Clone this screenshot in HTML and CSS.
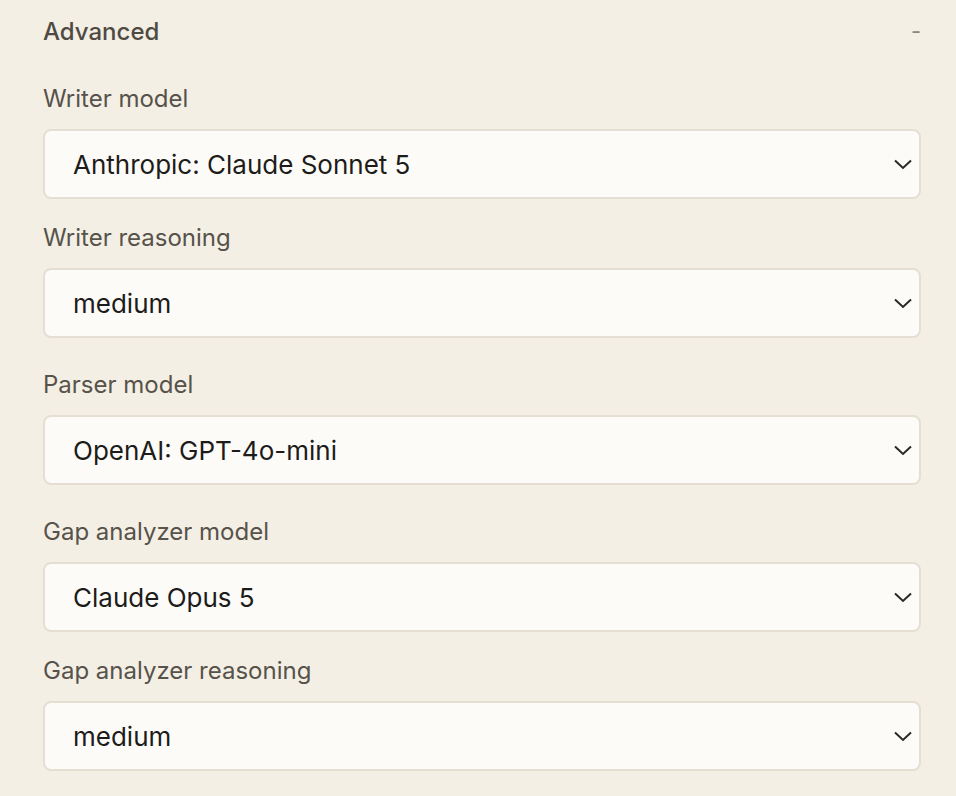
FILE: index.html
```html
<!DOCTYPE html>
<html>
<head>
<meta charset="utf-8">
<link rel="stylesheet" href="styles.css">
</head>
<body>
<div class="panel">
  <div class="header">
    <span class="title">Advanced</span>
    <span class="toggle">-</span>
  </div>
  <div class="group">
    <div class="field">
      <div class="label">Writer model</div>
      <div class="select"><span>Anthropic: Claude Sonnet 5</span><svg class="chev" width="18" height="11" viewBox="0 0 18 11"><path d="M1 1.5 L9 9 L17 1.5" fill="none" stroke="#2a2826" stroke-width="2"/></svg></div>
    </div>
    <div class="field">
      <div class="label">Writer reasoning</div>
      <div class="select"><span>medium</span><svg class="chev" width="18" height="11" viewBox="0 0 18 11"><path d="M1 1.5 L9 9 L17 1.5" fill="none" stroke="#2a2826" stroke-width="2"/></svg></div>
    </div>
  </div>
  <div class="group">
    <div class="field">
      <div class="label">Parser model</div>
      <div class="select"><span>OpenAI: GPT-4o-mini</span><svg class="chev" width="18" height="11" viewBox="0 0 18 11"><path d="M1 1.5 L9 9 L17 1.5" fill="none" stroke="#2a2826" stroke-width="2"/></svg></div>
    </div>
  </div>
  <div class="group">
    <div class="field">
      <div class="label">Gap analyzer model</div>
      <div class="select"><span>Claude Opus 5</span><svg class="chev" width="18" height="11" viewBox="0 0 18 11"><path d="M1 1.5 L9 9 L17 1.5" fill="none" stroke="#2a2826" stroke-width="2"/></svg></div>
    </div>
    <div class="field">
      <div class="label">Gap analyzer reasoning</div>
      <div class="select"><span>medium</span><svg class="chev" width="18" height="11" viewBox="0 0 18 11"><path d="M1 1.5 L9 9 L17 1.5" fill="none" stroke="#2a2826" stroke-width="2"/></svg></div>
    </div>
  </div>
</div>
</body>
</html>
```
FILE: styles.css
```css
html, body {
  margin: 0;
  padding: 0;
  background: #f3efe5;
}
body {
  font-family: Inter, "Noto Sans", sans-serif;
  width: 956px;
  height: 796px;
  overflow: hidden;
}
.panel {
  padding: 16px 35px 0 43px;
  display: flex;
  flex-direction: column;
  gap: 32px;
}
.header {
  display: flex;
  justify-content: space-between;
  align-items: center;
  height: 30px;
  margin-bottom: 6px;
}
.title {
  font-size: 24px;
  font-weight: 500;
  color: #4f4a42;
}
.toggle {
  font-size: 22px;
  color: #8a8680;
  padding-right: 0;
}
.group {
  display: flex;
  flex-direction: column;
  gap: 24px;
}
.field {
  display: flex;
  flex-direction: column;
  gap: 15px;
}
.label {
  font-size: 24px;
  line-height: 30px;
  color: #57524a;
}
.select {
  height: 70px;
  box-sizing: border-box;
  border: 2px solid #e5dfd3;
  border-radius: 8px;
  background: #fcfbf8;
  display: flex;
  align-items: center;
  justify-content: space-between;
  padding: 0 7px 0 28px;
  font-size: 26px;
  color: #1d1c1a;
}
.chev {
  display: block;
}
```
